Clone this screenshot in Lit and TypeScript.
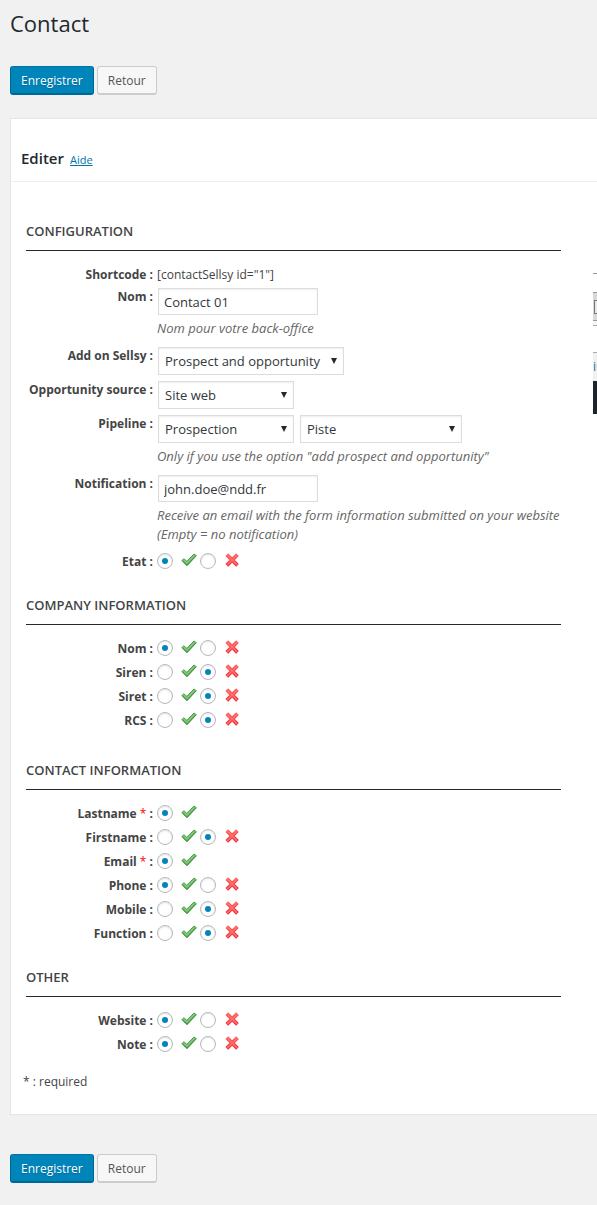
import { LitElement, html, css, nothing } from "lit";
import { customElement, property } from "lit/decorators.js";

const tick = html`<svg class="icon" viewBox="0 0 16 16" aria-hidden="true">
  <path d="M0.8 8.6 2.9 6.8 5.8 9.3 13 2 15.4 3.7 6 13.8Z"
    fill="#6dbb69" stroke="#469a43" stroke-width="0.9" stroke-linejoin="round" />
  <path d="M2.6 8 5.8 10.8 13.4 3.2" fill="none" stroke="#93d28f" stroke-width="0.9" />
  <path d="M2 9.6 6 13.2 14.6 4.2" fill="none" stroke="#3f8f3d" stroke-width="0.8" />
</svg>`;

const cross = html`<svg class="icon" viewBox="0 0 16 16" aria-hidden="true">
  <defs>
    <linearGradient id="r" x1="0" y1="1" x2="0" y2="15" gradientUnits="userSpaceOnUse">
      <stop offset="0" stop-color="#ff6a62" />
      <stop offset="1" stop-color="#f0202e" />
    </linearGradient>
  </defs>
  <path d="M2.8 2.7 13.5 13.4M13.5 2.7 2.8 13.4" fill="none" stroke="url(#r)" stroke-width="3.8" />
  <path d="M3.2 3.1 13.1 13M13.1 3.1 3.2 13" fill="none" stroke="#ff7473" stroke-width="1.4" />
</svg>`;

@customElement("toggle-row")
class ToggleRow extends LitElement {
  @property() name = "";
  @property() label = "";
  @property({ type: Boolean }) on = false;
  @property({ type: Boolean }) required = false;

  static styles = css`
    :host {
      display: block;
    }
    .row {
      display: grid;
      grid-template-columns: 127px minmax(0, 1fr);
      column-gap: 4px;
      align-items: center;
      height: 24px;
    }
    .name {
      padding-top: 2px;
      text-align: right;
      font-weight: 700;
      white-space: nowrap;
    }
    .star {
      color: #f00;
      font-weight: 400;
    }
    .choices {
      display: flex;
      gap: 3px;
    }
    .choice {
      display: flex;
      align-items: center;
      gap: 8px;
    }
    .radio {
      appearance: none;
      box-sizing: border-box;
      width: 16px;
      height: 16px;
      margin: 0;
      border: 1px solid #b4b9be;
      border-radius: 50%;
      background: #fff;
      box-shadow: inset 0 1px 2px rgba(0, 0, 0, 0.1);
      display: grid;
      place-items: center;
    }
    .radio:checked::before {
      content: "";
      width: 6px;
      height: 6px;
      border-radius: 50%;
      background: #0085ba;
    }
    .icon {
      display: block;
      width: 16px;
      height: 16px;
      padding-bottom: 2px;
    }
  `;

  render() {
    return html`<div class="row" role="radiogroup" aria-labelledby="name">
      <span class="name" id="name"
        >${this.label}${this.required ? html` <span class="star">*</span>` : nothing} :</span>
      <div class="choices">
        <label class="choice"
          ><input class="radio" type="radio" name=${this.name} value="1" aria-label="Oui" .checked=${this.on} />${tick}</label>
        ${this.required
          ? nothing
          : html`<label class="choice"
              ><input class="radio" type="radio" name=${this.name} value="0" aria-label="Non" .checked=${!this.on} />${cross}</label>`}
      </div>
    </div>`;
  }
}

@customElement("app-root")
class AppRoot extends LitElement {
  static styles = css`
    :host {
      display: block;
      box-sizing: border-box;
      min-height: 100vh;
      padding: 9px 0 22px 10px;
      background: #f1f1f1;
      color: #444;
      font-family: "Open Sans", "Noto Sans", sans-serif;
      font-size: 12px;
      line-height: 20px;
      overflow: hidden;
    }
    .title {
      margin: 0 0 29px;
      font-size: 22px;
      line-height: 28px;
      font-weight: 400;
      color: #23282d;
    }
    .actions {
      display: flex;
      gap: 3px;
    }
    .button {
      box-sizing: border-box;
      height: 29px;
      padding: 1px 10px 0;
      border: 1px solid #ccc;
      border-bottom-width: 2px;
      border-radius: 3px;
      background: #f7f7f7;
      color: #555;
      font: inherit;
    }
    .primary {
      background: #0085ba;
      border-color: #0073aa #006799 #006799;
      color: #fff;
      text-shadow: 0 1px 1px #006799;
    }
    .panel {
      margin: 23px 0 39px;
      border: 1px solid #e5e5e5;
      border-right: 0;
      background: #fff;
    }
    .head {
      display: flex;
      align-items: baseline;
      gap: 6px;
      padding: 27px 10px 11px;
      border-bottom: 1px solid #eee;
    }
    .subtitle {
      margin: 0;
      font-size: 15px;
      line-height: 24px;
      font-weight: 600;
      color: #23282d;
    }
    .help {
      font-size: 11px;
      color: #0073aa;
    }
    .body {
      display: grid;
      grid-template-columns: minmax(0, 1fr) 4px;
      column-gap: 32px;
      padding: 39px 0 0 15px;
    }
    .section {
      margin-bottom: 22px;
    }
    .loose {
      margin-bottom: 28px;
    }
    .heading {
      margin: 0 0 11px;
      padding-bottom: 9px;
      border-bottom: 1px solid #23282d;
      font-size: 13px;
      line-height: 20px;
      font-weight: 600;
      text-transform: uppercase;
    }
    .field {
      display: grid;
      grid-template-columns: 127px minmax(0, 1fr);
      column-gap: 4px;
    }
    .field + .field {
      margin-top: 4px;
    }
    .plain {
      line-height: 24px;
    }
    .plain + .field {
      margin-top: 0;
    }
    .state {
      margin-top: 2px;
    }
    .name {
      padding-top: 1px;
      text-align: right;
      font-weight: 700;
      white-space: nowrap;
    }
    .value {
      padding-top: 1px;
    }
    .plain .name,
    .plain .value {
      line-height: 23px;
    }
    .controls {
      display: flex;
      gap: 6px;
      padding: 2px 0 0 1px;
    }
    .text,
    .select {
      appearance: none;
      box-sizing: border-box;
      margin: 0;
      border: 1px solid #ddd;
      border-radius: 0;
      background-color: #fff;
      box-shadow: inset 0 1px 2px rgba(0, 0, 0, 0.07);
      color: #32373c;
      font: inherit;
      font-size: 13px;
    }
    .text {
      width: 160px;
      height: 27px;
      padding: 0 5px;
    }
    .select {
      width: 136px;
      height: 28px;
      padding: 0 6px;
      background-image: url("data:image/svg+xml,%3Csvg xmlns='http://www.w3.org/2000/svg' width='6' height='6'%3E%3Cpath d='M0 0h6L3 6z' fill='%2323282d'/%3E%3C/svg%3E");
      background-repeat: no-repeat;
      background-position: right 6px top 10px;
    }
    .wide {
      width: 186px;
    }
    .medium {
      width: 162px;
    }
    .hint {
      margin: 4px 0 0;
      padding-bottom: 3px;
      font-size: 13px;
      line-height: 19px;
      font-style: italic;
      color: #666;
    }
    .last {
      margin-bottom: 12px;
    }
    .note {
      margin: 4px 0 22px 12px;
    }
    .aside {
      margin-top: 52px;
      overflow: hidden;
    }
    .strip {
      box-sizing: border-box;
      border-top: 1px solid #999;
      height: 19px;
    }
    .bar {
      box-sizing: border-box;
      height: 29px;
      padding: 7px 0 0 1px;
      border: solid #999;
      border-width: 1px 0;
      background: #d8d8d8;
    }
    .box {
      box-sizing: border-box;
      width: 14px;
      height: 14px;
      border: 1px solid #777;
      background: #e8e8e8;
    }
    .gap {
      box-sizing: border-box;
      height: 31px;
      border-top: 4px solid #f5f5f5;
    }
    .rule {
      height: 1px;
      background: #aaa;
    }
    .tab {
      box-sizing: border-box;
      height: 29px;
      border-top: 1px solid #aaa;
      background: #f1f1f1;
      color: #0073aa;
      line-height: 28px;
    }
    .dark {
      height: 33px;
      background: #1d2329;
    }
  `;

  private actions() {
    return html`<div class="actions">
      <button class="button primary" type="button">Enregistrer</button>
      <button class="button" type="button">Retour</button>
    </div>`;
  }

  render() {
    return html`
      <h1 class="title">Contact</h1>
      ${this.actions()}
      <main class="panel">
        <header class="head">
          <h2 class="subtitle">Editer</h2>
          <a class="help" href="#">Aide</a>
        </header>
        <div class="body">
          <form>
            <section class="section">
              <h3 class="heading">Configuration</h3>
              <div class="field plain">
                <span class="name">Shortcode :</span>
                <span class="value">[contactSellsy id="1"]</span>
              </div>
              <div class="field">
                <label class="name" for="nom">Nom :</label>
                <div>
                  <div class="controls"><input class="text" id="nom" type="text" value="Contact 01" /></div>
                  <p class="hint">Nom pour votre back-office</p>
                </div>
              </div>
              <div class="field">
                <label class="name" for="add">Add on Sellsy :</label>
                <div class="controls">
                  <select class="select wide" id="add"><option>Prospect and opportunity</option></select>
                </div>
              </div>
              <div class="field">
                <label class="name" for="source">Opportunity source :</label>
                <div class="controls">
                  <select class="select" id="source"><option>Site web</option></select>
                </div>
              </div>
              <div class="field">
                <label class="name" for="pipeline">Pipeline :</label>
                <div>
                  <div class="controls">
                    <select class="select" id="pipeline"><option>Prospection</option></select>
                    <select class="select medium" aria-label="Pipeline"><option>Piste</option></select>
                  </div>
                  <p class="hint">Only if you use the option "add prospect and opportunity"</p>
                </div>
              </div>
              <div class="field">
                <label class="name" for="mail">Notification :</label>
                <div>
                  <div class="controls"><input class="text" id="mail" type="text" value="john.doe@ndd.fr" /></div>
                  <p class="hint">
                    Receive an email with the form information submitted on your website<br />(Empty = no notification)
                  </p>
                </div>
              </div>
              <toggle-row class="state" name="etat" label="Etat" on></toggle-row>
            </section>
            <section class="section loose">
              <h3 class="heading">Company information</h3>
              <toggle-row name="company" label="Nom" on></toggle-row>
              <toggle-row name="siren" label="Siren"></toggle-row>
              <toggle-row name="siret" label="Siret"></toggle-row>
              <toggle-row name="rcs" label="RCS"></toggle-row>
            </section>
            <section class="section">
              <h3 class="heading">Contact information</h3>
              <toggle-row name="lastname" label="Lastname" on required></toggle-row>
              <toggle-row name="firstname" label="Firstname"></toggle-row>
              <toggle-row name="email" label="Email" on required></toggle-row>
              <toggle-row name="phone" label="Phone" on></toggle-row>
              <toggle-row name="mobile" label="Mobile"></toggle-row>
              <toggle-row name="function" label="Function"></toggle-row>
            </section>
            <section class="section last">
              <h3 class="heading">Other</h3>
              <toggle-row name="website" label="Website" on></toggle-row>
              <toggle-row name="note" label="Note" on></toggle-row>
            </section>
          </form>
          <aside class="aside" aria-hidden="true">
            <div class="strip"></div>
            <div class="bar"><div class="box"></div></div>
            <div class="gap"><div class="rule"></div></div>
            <div class="tab">iu</div>
            <div class="dark"></div>
          </aside>
        </div>
        <p class="note">* : required</p>
      </main>
      ${this.actions()}
    `;
  }
}
